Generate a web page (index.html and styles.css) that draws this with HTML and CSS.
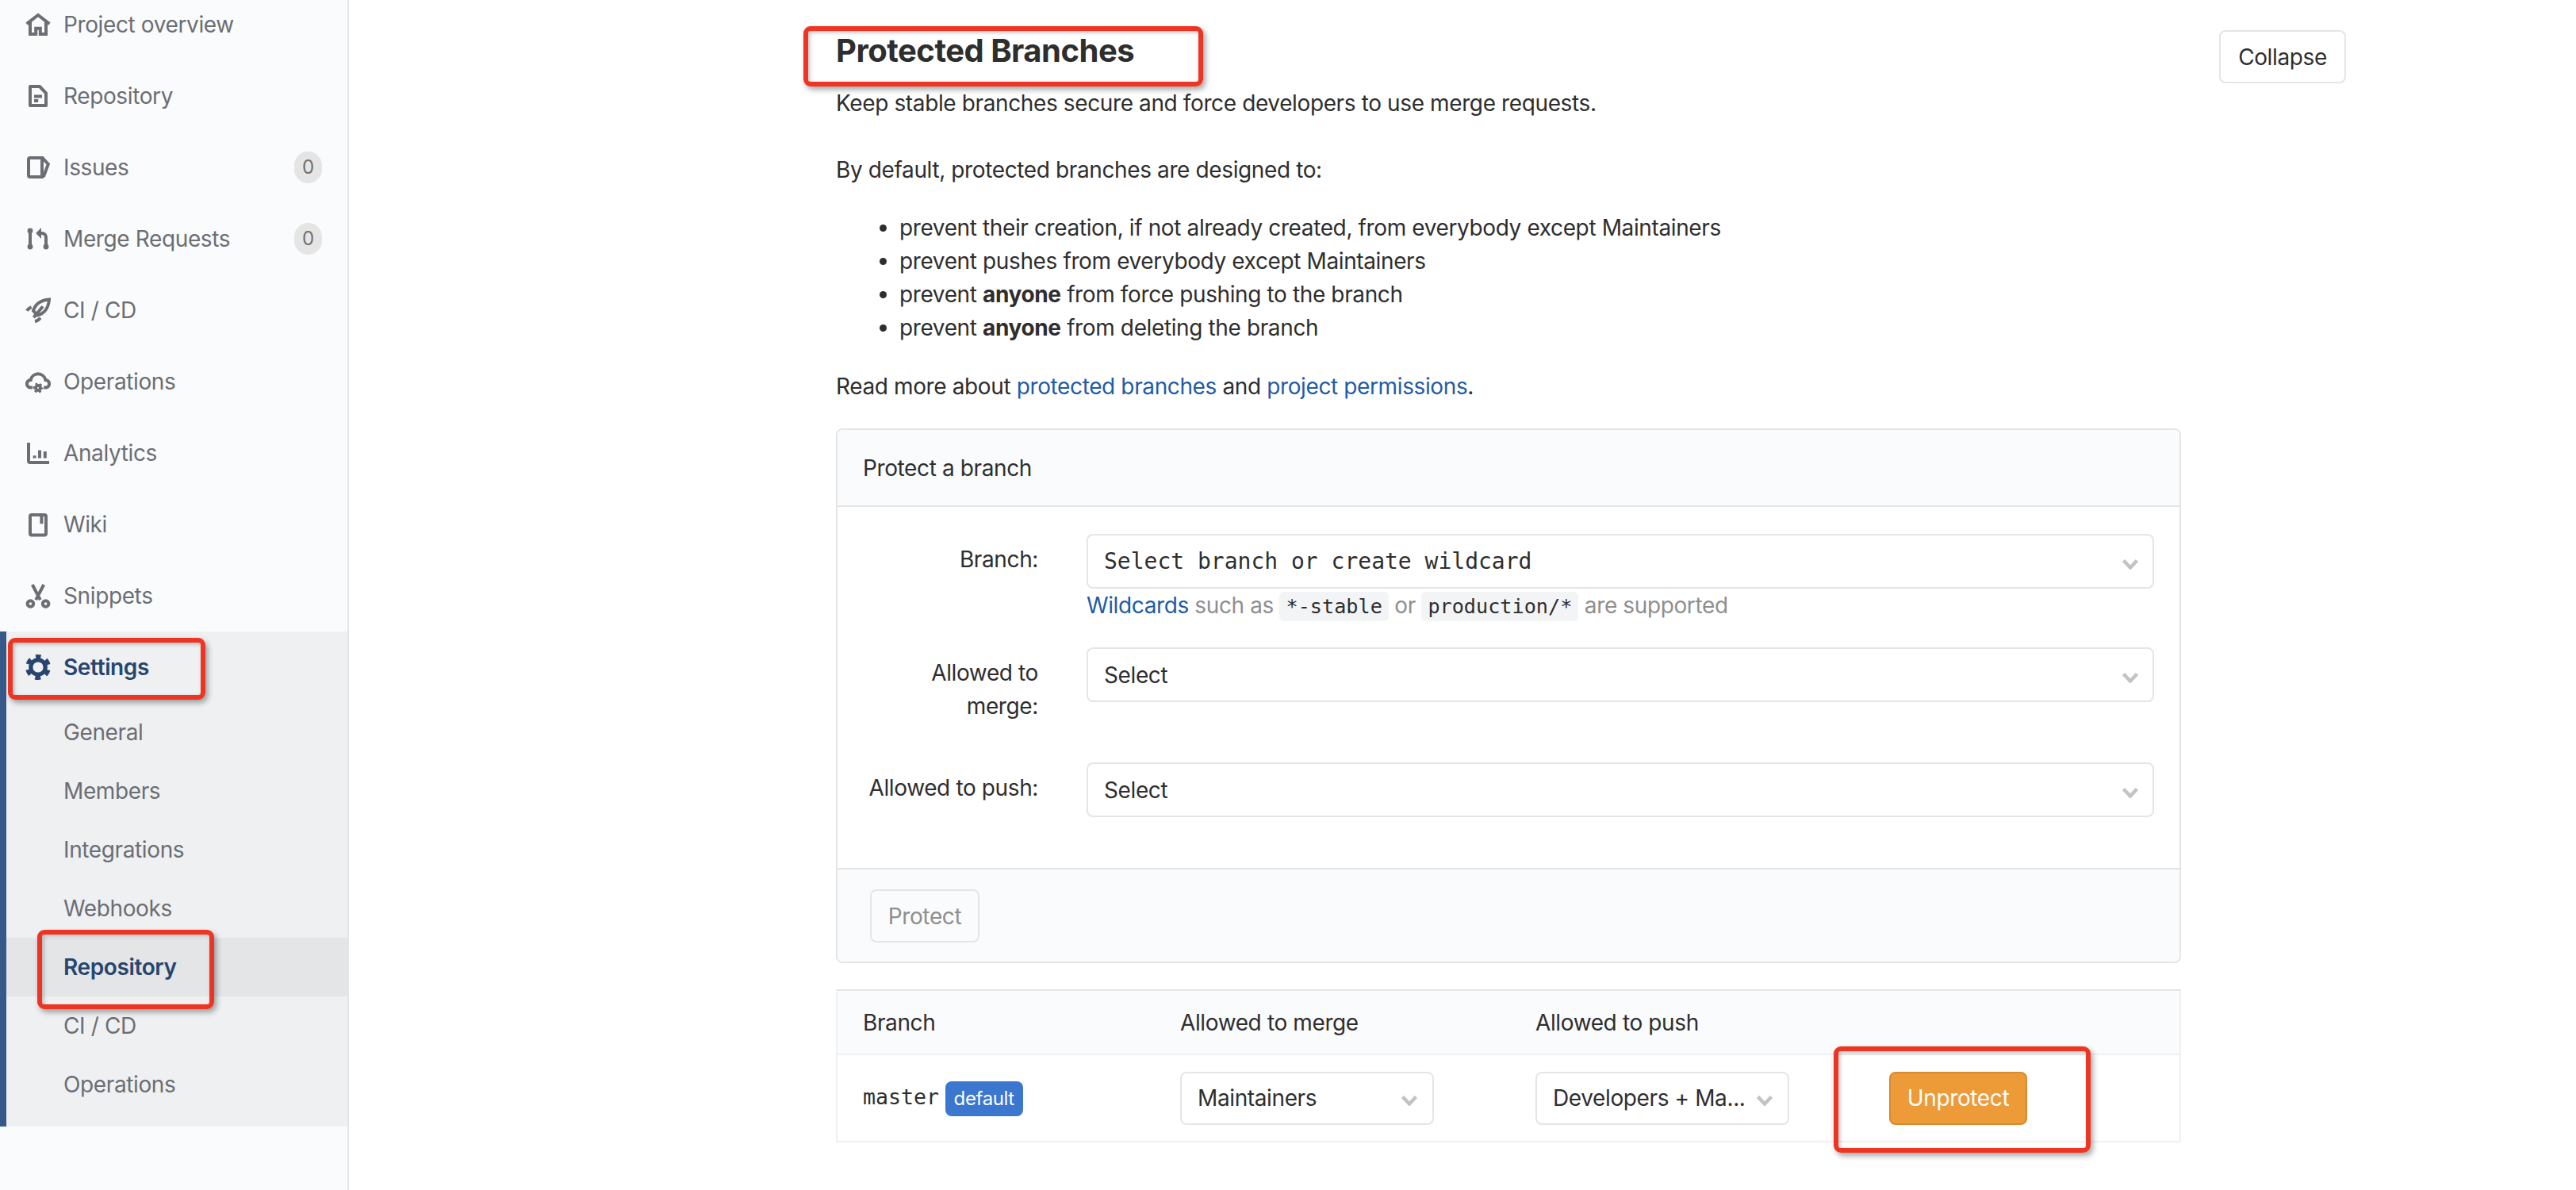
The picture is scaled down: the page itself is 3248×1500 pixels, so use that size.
FILE: index.html
```html
<!DOCTYPE html>
<html lang="en">
<head>
    <meta charset="UTF-8">
    <meta name="viewport" content="width=device-width, initial-scale=1.0">
    <title>Repository Settings</title>
    <link rel="stylesheet" href="styles.css">
</head>
<body>
    <div class="page">
        <aside class="sidebar">
            <nav class="nav">
                <a class="nav-item">
                    <svg class="icon" viewBox="0 0 16 16"><path d="M.8 7.6L8 2l7.2 5.6"/><path d="M3 6.2V14h3.6v-3.6h2.8V14H13V6.2"/></svg>
                    <span>Project overview</span>
                </a>
                <a class="nav-item">
                    <svg class="icon" viewBox="0 0 16 16"><path d="M3 2h6l4 4.2V14H3z" stroke-linejoin="round"/><path d="M5.5 8.2h5M5.5 11h2.6"/></svg>
                    <span>Repository</span>
                </a>
                <a class="nav-item">
                    <svg class="icon" viewBox="0 0 16 16"><path d="M3 2h7.5v12H3a1 1 0 0 1-1-1V3a1 1 0 0 1 1-1z"/><path d="M10.8 2l3.6 4-3 8"/></svg>
                    <span>Issues</span>
                    <span class="count">0</span>
                </a>
                <a class="nav-item">
                    <svg class="icon" viewBox="0 0 16 16"><path d="M3 3v10M13 13V7a2.5 2.5 0 0 0-2.5-2.5H9"/><circle class="solid" cx="3" cy="3" r="1.7"/><circle class="solid" cx="3" cy="13" r="1.7"/><circle class="solid" cx="13" cy="13" r="1.7"/><path class="solid" d="M10 1v7L6.6 4.5z"/></svg>
                    <span>Merge Requests</span>
                    <span class="count">0</span>
                </a>
                <a class="nav-item">
                    <svg class="icon" viewBox="0 0 16 16"><path d="M15 1.2C10 1.6 6.2 4 5 8.4l2.6 2.8C12 10.2 14.6 6.4 15 1.2z"/><path d="M1 8.4c.6-1 1.6-1.9 2.8-2.4M6 15c1.4-.2 2.6-1 3.4-2.2M5.2 12.6L11 5.6"/></svg>
                    <span>CI / CD</span>
                </a>
                <a class="nav-item">
                    <svg class="icon" viewBox="0 0 16 16"><path d="M4.4 11.8H3.4a2.4 2.4 0 0 1-.1-4.8 4.8 4.8 0 0 1 9.4 0 2.4 2.4 0 0 1-.1 4.8h-1"/><circle cx="8" cy="12" r="1.5"/><circle class="teeth-small" cx="8" cy="12" r="2.7"/></svg>
                    <span>Operations</span>
                </a>
                <a class="nav-item">
                    <svg class="icon" viewBox="0 0 16 16"><path d="M2 1.5V13a1 1 0 0 0 1 1h12"/><path d="M5.8 9.6v1.6M9 6.2v5M12.4 7v4.2"/></svg>
                    <span>Analytics</span>
                </a>
                <a class="nav-item">
                    <svg class="icon" viewBox="0 0 16 16"><rect x="3" y="2" width="10" height="12.8" rx="1"/><path d="M10.2 2v5.6"/></svg>
                    <span>Wiki</span>
                </a>
                <a class="nav-item">
                    <svg class="icon" viewBox="0 0 16 16"><path d="M4.4 1l5 9.6M11.6 1l-5 9.6"/><circle cx="3.2" cy="13" r="1.9"/><circle cx="12.8" cy="13" r="1.9"/></svg>
                    <span>Snippets</span>
                </a>
                <div class="nav-group">
                    <a class="nav-item nav-item-open">
                        <svg class="icon icon-gear" viewBox="0 0 16 16"><circle cx="8" cy="8" r="4.6"/><circle class="teeth" cx="8" cy="8" r="6.6"/></svg>
                        <span>Settings</span>
                    </a>
                    <a class="sub-item">General</a>
                    <a class="sub-item">Members</a>
                    <a class="sub-item">Integrations</a>
                    <a class="sub-item">Webhooks</a>
                    <a class="sub-item sub-item-active">Repository</a>
                    <a class="sub-item">CI / CD</a>
                    <a class="sub-item">Operations</a>
                </div>
            </nav>
        </aside>

        <main class="content">
            <section class="settings">
                <div class="settings-head">
                    <h2>Protected Branches</h2>
                    <button class="btn btn-collapse">Collapse</button>
                </div>
                <p class="lead">Keep stable branches secure and force developers to use merge requests.</p>
                <p class="lead-gap">By default, protected branches are designed to:</p>
                <ul class="rules">
                    <li>prevent their creation, if not already created, from everybody except Maintainers</li>
                    <li>prevent pushes from everybody except Maintainers</li>
                    <li>prevent <strong>anyone</strong> from force pushing to the branch</li>
                    <li>prevent <strong>anyone</strong> from deleting the branch</li>
                </ul>
                <p class="read-more">Read more about <a class="link">protected branches</a> and <a class="link">project permissions</a>.</p>

                <form class="panel">
                    <div class="panel-head">Protect a branch</div>
                    <div class="panel-body">
                        <div class="form-row">
                            <label class="form-label">Branch:</label>
                            <div class="form-field">
                                <div class="select select-mono">
                                    <span>Select branch or create wildcard</span>
                                    <svg class="chevron" viewBox="0 0 22 14"><path d="M2.5 2.5L11 11.5l8.5-9"/></svg>
                                </div>
                                <p class="help"><a class="link">Wildcards</a> such as <code>*-stable</code> or <code>production/*</code> are supported</p>
                            </div>
                        </div>
                        <div class="form-row">
                            <label class="form-label">Allowed to merge:</label>
                            <div class="form-field">
                                <div class="select">
                                    <span>Select</span>
                                    <svg class="chevron" viewBox="0 0 22 14"><path d="M2.5 2.5L11 11.5l8.5-9"/></svg>
                                </div>
                            </div>
                        </div>
                        <div class="form-row">
                            <label class="form-label">Allowed to push:</label>
                            <div class="form-field">
                                <div class="select">
                                    <span>Select</span>
                                    <svg class="chevron" viewBox="0 0 22 14"><path d="M2.5 2.5L11 11.5l8.5-9"/></svg>
                                </div>
                            </div>
                        </div>
                    </div>
                    <div class="panel-foot">
                        <button class="btn btn-disabled" type="button">Protect</button>
                    </div>
                </form>

                <table class="branches">
                    <colgroup>
                        <col class="col-branch">
                        <col class="col-merge">
                        <col class="col-push">
                        <col>
                    </colgroup>
                    <thead>
                        <tr>
                            <th>Branch</th>
                            <th>Allowed to merge</th>
                            <th>Allowed to push</th>
                            <th></th>
                        </tr>
                    </thead>
                    <tbody>
                        <tr>
                            <td><span class="branch-name">master</span> <span class="badge">default</span></td>
                            <td>
                                <div class="select select-small">
                                    <span>Maintainers</span>
                                    <svg class="chevron" viewBox="0 0 22 14"><path d="M2.5 2.5L11 11.5l8.5-9"/></svg>
                                </div>
                            </td>
                            <td>
                                <div class="select select-small">
                                    <span>Developers + Ma...</span>
                                    <svg class="chevron" viewBox="0 0 22 14"><path d="M2.5 2.5L11 11.5l8.5-9"/></svg>
                                </div>
                            </td>
                            <td><button class="btn btn-warning" type="button">Unprotect</button></td>
                        </tr>
                    </tbody>
                </table>
            </section>
        </main>

        <!-- red boxes drawn over the screenshot -->
        <div class="mark mark-settings"></div>
        <div class="mark mark-repository"></div>
        <div class="mark mark-title"></div>
        <div class="mark mark-unprotect"></div>
    </div>
</body>
</html>
```

FILE: styles.css
```css
* {
    box-sizing: border-box;
}
body {
    margin: 0;
    font-family: Inter, "Noto Sans", sans-serif;
    font-size: 28px;
    line-height: 42px;
    letter-spacing: -.38px;
    color: #2e2e2e;
    background: #fff;
}
h2, p, ul {
    margin: 0;
}
.page {
    position: relative;
    display: flex;
    height: 1500px;
    overflow: hidden;
}

/* sidebar */
.sidebar {
    width: 440px;
    flex-shrink: 0;
    background: #fafbfc;
    border-right: 2px solid #e5e5e5;
}
.nav {
    margin-top: -14px;
}
.nav-item {
    display: flex;
    align-items: center;
    gap: 16px;
    height: 90px;
    padding: 0 32px;
    color: #6b6e73;
}
.icon {
    width: 32px;
    height: 32px;
    flex-shrink: 0;
    fill: none;
    stroke: #6b6e73;
    stroke-width: 2;
}
.icon .solid {
    fill: #6b6e73;
    stroke: none;
}
.teeth-small {
    stroke-width: 1.2;
    stroke-dasharray: 1.4 1.43;
    stroke-dashoffset: .7;
}
.icon-gear {
    stroke: #27456f;
    stroke-width: 2.6;
}
.icon-gear .teeth {
    stroke-width: 2.8;
    stroke-dasharray: 3.4 3.51;
    stroke-dashoffset: 1.7;
    transform: rotate(-90deg);
    transform-origin: 8px 8px;
}
.count {
    width: 35px;
    height: 40px;
    margin-left: auto;
    border-radius: 18px;
    background: #e5e5e5;
    color: #707070;
    font-size: 24px;
    line-height: 40px;
    text-align: center;
}
.nav-group {
    padding-bottom: 16px;
    border-left: 8px solid #37598a;
    background: #eff0f1;
}
.nav-group .nav-item {
    padding-left: 24px;
}
.nav-item-open {
    color: #27456f;
    font-weight: 600;
}
.sub-item {
    display: block;
    height: 74px;
    padding-left: 72px;
    line-height: 74px;
    color: #6b6e73;
}
.sub-item-active {
    background: #e4e5e6;
    color: #27456f;
    font-weight: 600;
}

/* main column */
.content {
    flex: 1;
    padding-left: 614px;
}
.settings {
    width: 1904px;
    padding-top: 38px;
}
.settings-head {
    display: flex;
    justify-content: space-between;
    align-items: flex-start;
    height: 71px;
}
.settings-head h2 {
    font-size: 40px;
    line-height: 52px;
    font-weight: 700;
    letter-spacing: -.5px;
}
.lead-gap {
    margin-top: 42px;
}
.rules {
    margin-top: 31px;
    padding-left: 80px;
}
.read-more {
    margin-top: 32px;
}
.link {
    color: #1f5ca6;
}
.btn {
    height: 67px;
    padding: 0;
    border: 2px solid #e5e5e5;
    border-radius: 8px;
    background: #fff;
    color: #2e2e2e;
    font: inherit;
    letter-spacing: inherit;
}
.btn-collapse {
    width: 160px;
}
.btn-disabled {
    background: #fafbfc;
    color: #8f8f8f;
}
.btn-warning {
    width: 174px;
    border-color: #d98a2e;
    background: #ed9a38;
    color: #fff;
}

/* protect form */
.panel {
    display: block;
    width: 1696px;
    margin-top: 32px;
    border: 2px solid #e5e5e5;
    border-radius: 8px;
}
.panel-head {
    height: 97px;
    padding-left: 32px;
    border-bottom: 2px solid #e5e5e5;
    background: #fafbfc;
    line-height: 97px;
    border-radius: 6px 6px 0 0;
}
.panel-body {
    padding: 34px 32px 30px 0;
}
.form-row {
    display: flex;
    margin-bottom: 32px;
}
.form-label {
    width: 253px;
    flex-shrink: 0;
    padding: 11px 0 18px 34px;
    text-align: right;
}
.form-field {
    flex: 1;
    margin-left: 61px;
}
.select {
    display: flex;
    align-items: center;
    justify-content: space-between;
    height: 69px;
    padding: 0 17px 0 20px;
    border: 2px solid #e5e5e5;
    border-radius: 8px;
    background: #fff;
}
.select-mono {
    font-family: "DejaVu Sans Mono", monospace;
    letter-spacing: 0;
}
.chevron {
    width: 22px;
    height: 14px;
    margin-top: 6px;
    flex-shrink: 0;
    fill: none;
    stroke: #c2c3c5;
    stroke-width: 4.5;
}
.help {
    height: 42px;
    color: #8f8f8f;
}
code {
    padding: 4px 8px;
    border-radius: 6px;
    background: #f3f4f6;
    color: #2e2e2e;
    font-family: "DejaVu Sans Mono", monospace;
    font-size: 25.2px;
    letter-spacing: 0;
}
.panel-foot {
    padding: 25px 41px 24px;
    border-top: 2px solid #e5e5e5;
    background: #fafbfc;
    border-radius: 0 0 6px 6px;
}
.panel-foot .btn {
    display: block;
    width: 138px;
}

/* branches table */
.branches {
    width: 1696px;
    margin-top: 33px;
    table-layout: fixed;
    border-collapse: separate;
    border-spacing: 0;
    border: 2px solid #f0f0f0;
    border-top-color: #e5e5e5;
}
.col-branch {
    width: 400px;
}
.col-merge {
    width: 448px;
}
.col-push {
    width: 446px;
}
.branches th {
    height: 81px;
    padding: 0 0 0 32px;
    background: #fafbfc;
    border-bottom: 2px solid #f0f0f0;
    font-weight: 400;
    text-align: left;
}
.branches td {
    height: 108px;
    padding: 0 0 0 32px;
}
.branch-name {
    font-family: "DejaVu Sans Mono", monospace;
    font-size: 26.6px;
    letter-spacing: 0;
}
.badge {
    display: inline-block;
    height: 44px;
    padding: 0 11px;
    border-radius: 8px;
    background: #3b76cf;
    color: #fff;
    font-size: 24px;
    line-height: 44px;
    vertical-align: middle;
}
.select-small {
    width: 320px;
    height: 67px;
    padding: 0 18px 0 20px;
}

/* annotations */
.mark {
    position: absolute;
    border: 6px solid #ee3524;
    border-radius: 9px;
    box-shadow: 3px 4px 7px rgba(0, 0, 0, .35), inset 2px 2px 5px rgba(0, 0, 0, .25);
}
.mark-settings {
    left: 10px;
    top: 804px;
    width: 249px;
    height: 78px;
}
.mark-repository {
    left: 47px;
    top: 1172px;
    width: 223px;
    height: 100px;
}
.mark-title {
    left: 1013px;
    top: 33px;
    width: 504px;
    height: 76px;
}
.mark-unprotect {
    left: 2312px;
    top: 1319px;
    width: 324px;
    height: 134px;
}
```
